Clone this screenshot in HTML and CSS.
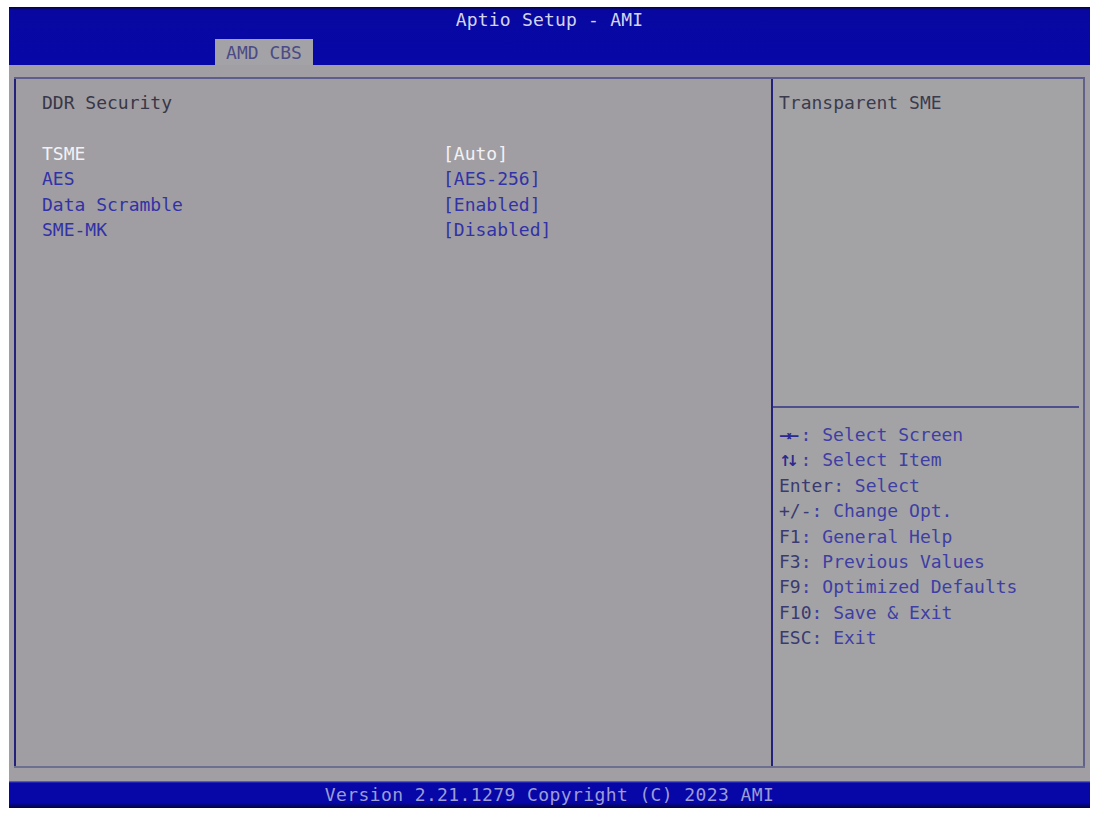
FILE: index.html
```html
<!DOCTYPE html>
<html>
<head>
<meta charset="utf-8">
<title>Aptio Setup - AMI</title>
<link rel="stylesheet" href="styles.css">
</head>
<body>
<div class="screen">
  <header class="header">
    <div class="title">Aptio Setup - AMI</div>
    <div class="tabs"><div class="tab">AMD CBS</div></div>
  </header>
  <main class="main">
    <div class="frame">
      <section class="left">
        <div class="heading">DDR Security</div>
        <div class="blank"></div>
        <div class="rows">
          <div class="label sel">TSME</div><div class="value sel">[Auto]</div>
          <div class="label">AES</div><div class="value">[AES-256]</div>
          <div class="label">Data Scramble</div><div class="value">[Enabled]</div>
          <div class="label">SME-MK</div><div class="value">[Disabled]</div>
        </div>
      </section>
      <aside class="right">
        <div class="help-top">Transparent SME</div>
        <div class="help-keys">
          <div class="line"><span class="k">→←</span>: Select Screen</div>
          <div class="line"><span class="k">↑↓</span>: Select Item</div>
          <div class="line"><span class="k2">Enter</span>: Select</div>
          <div class="line"><span class="k2">+/-</span>: Change Opt.</div>
          <div class="line"><span class="k2">F1</span>: General Help</div>
          <div class="line"><span class="k2">F3</span>: Previous Values</div>
          <div class="line"><span class="k2">F9</span>: Optimized Defaults</div>
          <div class="line"><span class="k2">F10</span>: Save &amp; Exit</div>
          <div class="line"><span class="k2">ESC</span>: Exit</div>
        </div>
      </aside>
    </div>
  </main>
  <footer class="footer">Version 2.21.1279 Copyright (C) 2023 AMI</footer>
</div>
</body>
</html>
```
FILE: styles.css
```css
* { box-sizing: border-box; }
html, body { margin: 0; padding: 0; background: #ffffff; }
body {
  font-family: "DejaVu Sans Mono", "Liberation Mono", monospace;
  font-size: 18px;
}
.screen {
  margin: 7px 0 0 9px;
  width: 1081px;
  height: 801px;
  display: flex;
  flex-direction: column;
  background: #a19fa3;
}
.header {
  height: 58px;
  background: linear-gradient(to bottom, #05052a 0px, #0808a0 3px, #0707a8 100%);
  display: flex;
  flex-direction: column;
}
.title {
  height: 32px;
  line-height: 26px;
  text-align: center;
  color: #d4d4ee;
  letter-spacing: 0.2px;
}
.tabs { height: 26px; display: flex; }
.tab {
  margin-left: 206px;
  width: 98px;
  height: 26px;
  line-height: 27px;
  background: #a3a2a6;
  color: #4b4b86;
  text-align: center;
}
.main {
  height: 716px;
  padding: 12px 5px 13px 5px;
  background: #a19fa3;
}
.frame {
  height: 100%;
  display: flex;
  border-top: 2px solid #5d5d8e;
  border-bottom: 2px solid #6e6e8e;
}
.left {
  width: 759px;
  border-left: 2px solid #22227a;
  border-right: 2px solid #22227a;
  padding: 11px 0 0 26px;
  line-height: 25.4px;
  background: #a09ea2;
}
.heading { color: #373747; }
.blank { height: 25.4px; }
.rows {
  display: grid;
  grid-template-columns: 401px auto;
}
.label, .value { color: #3232a8; }
.sel { color: #f2f2f6; }
.right {
  flex: 1;
  border-right: 2px solid #60608a;
  display: flex;
  flex-direction: column;
  background: #a3a3a6;
  line-height: 25.4px;
}
.help-top {
  height: 329px;
  padding: 11px 0 0 6px;
  color: #3b3b4d;
  border-bottom: 2px solid #4e4e8a;
  margin-right: 4px;
}
.help-keys {
  padding: 14px 0 0 6px;
  color: #3e3ea4;
}
.line {
  height: 25.4px;
  line-height: 25.4px;
  white-space: nowrap;
}
.k {
  display: inline-block;
  width: 21.6px;
  line-height: 1;
  font-family: "DejaVu Sans", sans-serif;
  font-size: 15px;
  font-weight: bold;
  letter-spacing: -5px;
  color: #2a2a90;
  white-space: nowrap;
}
.k2 { color: #3a3a70; }
.footer {
  height: 27px;
  line-height: 27px;
  background: linear-gradient(to bottom, #6f6fd0 0px, #0707a8 2px, #0707a8 80%, #040440 100%);
  color: #9c9cd6;
  text-align: center;
  letter-spacing: 0.4px;
}
```
